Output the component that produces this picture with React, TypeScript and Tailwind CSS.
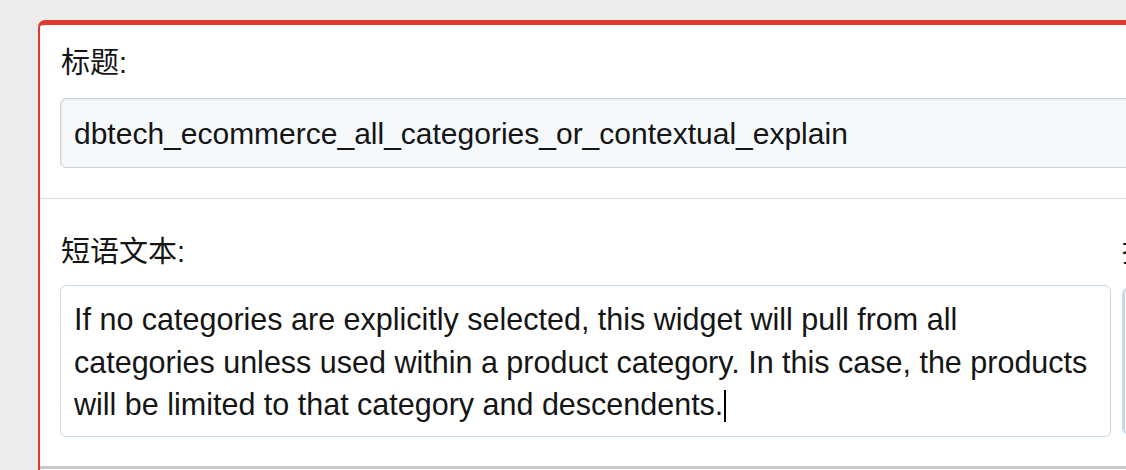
import React from "react";

export default function App() {
  const font = { fontFamily: '"Liberation Sans", Arial, "Noto Sans CJK SC", sans-serif' };
  return (
    <div className="w-[1126px] h-[470px] overflow-hidden bg-[#ececec] pt-[20px] pl-[38px]" style={font}>
      <div className="w-[1240px] h-[460px] bg-white border-t-[5px] border-l-2 border-[#df3a2d] rounded-tl-[7px] text-[#151515]">
        <div className="pl-[20px] pt-[20px] pb-[30px] border-b border-[#dadada]">
          <div className="text-[29px] leading-[36px] mb-[17px] pl-[1px]">标题:</div>
          <div className="h-[70px] w-[1200px] flex items-center pl-[13px] bg-[#f5f9fc] border border-[#d2d2d2] rounded-[6px] shadow-[inset_1px_1px_2px_rgba(0,0,0,0.06)] text-[30px]">
            dbtech_ecommerce_all_categories_or_contextual_explain
          </div>
        </div>
        <div className="pl-[20px] pt-[35px] pb-[29px] border-b-[3px] border-[#cbcbcb] flex gap-[11px]">
          <div className="w-[1051px] shrink-0">
            <div className="text-[29px] leading-[36px] mb-[15px] pl-[1px]">短语文本:</div>
            <div className="h-[152px] border border-[#c4d9eb] rounded-[6px] bg-white pl-[13px] pr-[18px] pt-[12px] text-[30.5px] leading-[42.5px]">
              If no categories are explicitly selected, this widget will pull from all categories unless used within a product category. In this case, the products will be limited to that category and descendents.
              <span className="inline-block w-[2px] h-[32px] bg-black align-[-7px] ml-[1px]"></span>
            </div>
          </div>
          <div className="w-[200px] shrink-0">
            <div className="text-[29px] leading-[36px] mb-[18px]">描述:</div>
            <div className="h-[146px] border border-[#c4d9eb] border-l-[3px] rounded-[6px] bg-white"></div>
          </div>
        </div>
      </div>
    </div>
  );
}
